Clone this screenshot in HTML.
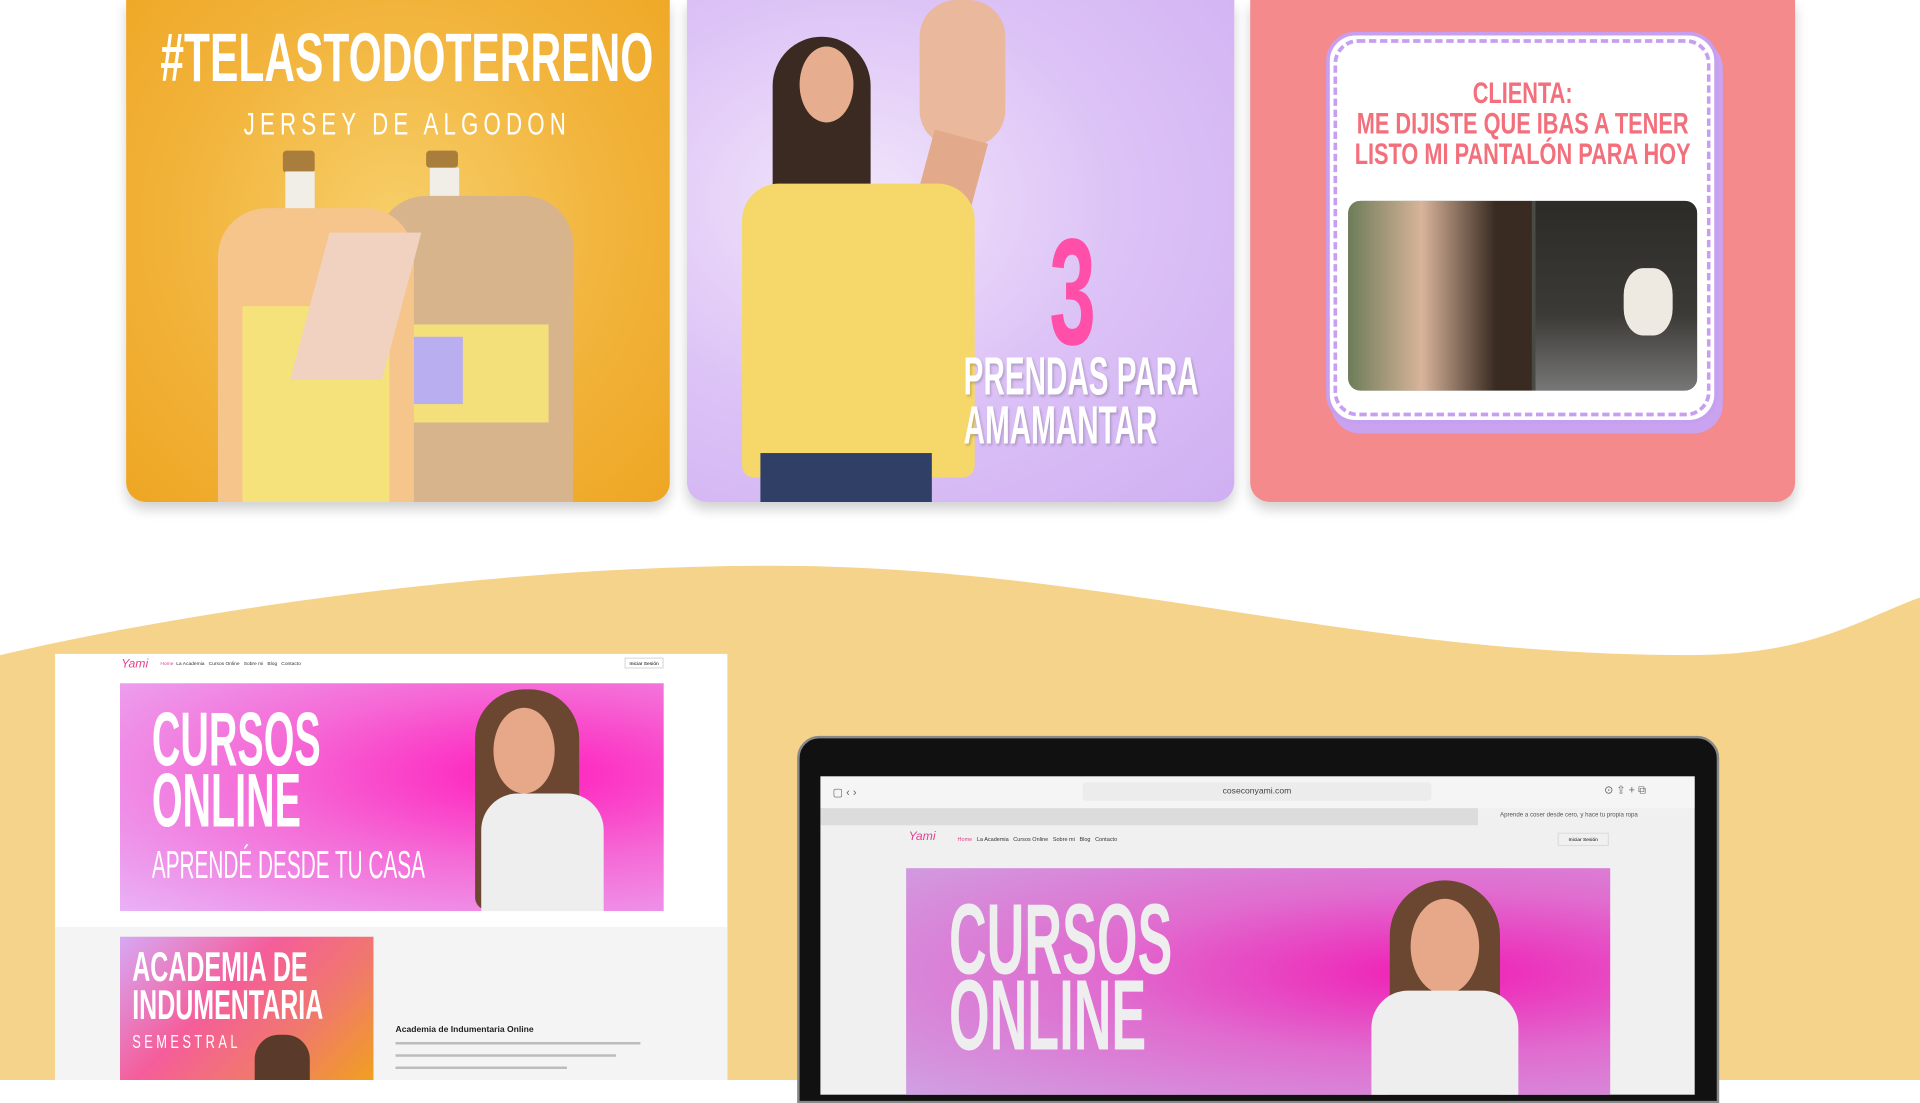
<!DOCTYPE html>
<html><head><meta charset="utf-8"><style>
*{margin:0;padding:0;box-sizing:border-box}
html,body{width:1920px;height:1080px;overflow:hidden;background:#fff;font-family:"Liberation Sans",sans-serif}
#s{position:absolute;left:0;top:0;width:1568px;height:882px;transform:scale(1.22449);transform-origin:0 0}
.a{position:absolute}
.cond{font-family:"Liberation Sans",sans-serif;font-weight:bold;transform-origin:0 0}
.card{position:absolute;top:0;height:410px;border-radius:0 0 16px 16px;box-shadow:0 6px 10px rgba(0,0,0,.18);overflow:hidden}
</style></head><body><div id="s">
<svg class="a" style="left:0;top:0" width="1568" height="882"><path d="M0 535 C150 500 400 462 630 462 C900 462 1100 535 1380 535 C1480 535 1520 505 1568 488 L1568 882 L0 882Z" fill="#f5d38a"/></svg>

<div class="card" style="left:103px;width:444px;background:radial-gradient(ellipse at 50% 45%,#f7cf6a 0%,#f2b43c 55%,#eea623 100%)">
 <div class="a cond" style="left:28px;top:14px;font-size:56px;color:#fff;transform:scaleX(.62);white-space:nowrap">#TELASTODOTERRENO</div>
 <div class="a" style="left:96px;top:86px;font-size:26px;color:#fff;letter-spacing:6px;white-space:nowrap;transform:scaleX(.7);transform-origin:0 0">JERSEY DE ALGODON</div>
 <div class="a" style="left:128px;top:123px;width:26px;height:18px;background:#a97e3c;border-radius:3px"></div>
 <div class="a" style="left:130px;top:140px;width:24px;height:40px;background:#f1eee8"></div>
 <div class="a" style="left:245px;top:123px;width:26px;height:14px;background:#a97e3c;border-radius:3px"></div>
 <div class="a" style="left:248px;top:137px;width:24px;height:30px;background:#f1eee8"></div>
 <div class="a" style="left:205px;top:160px;width:160px;height:250px;background:#d8b48c;border-radius:40px 40px 0 0"></div>
 <div class="a" style="left:225px;top:265px;width:120px;height:80px;background:#f3e07a"></div>
 <div class="a" style="left:235px;top:275px;width:40px;height:55px;background:#b9aef0"></div>
 <div class="a" style="left:75px;top:170px;width:160px;height:240px;background:#f5c58c;border-radius:40px 40px 0 0"></div>
 <div class="a" style="left:95px;top:250px;width:120px;height:160px;background:#f6e27a"></div>
 <div class="a" style="left:150px;top:190px;width:75px;height:120px;background:#f1d2c0;transform:skewX(-15deg)"></div>
</div>
<div class="card" style="left:561px;width:447px;background:radial-gradient(ellipse at 30% 40%,#f2e6fb 0%,#dcc2f6 50%,#cfaff2 100%)">
 <div class="a" style="left:70px;top:30px;width:80px;height:170px;background:#3a2a22;border-radius:40px 40px 10px 10px"></div>
 <div class="a" style="left:92px;top:38px;width:44px;height:62px;background:#e6ad8f;border-radius:50%"></div>
 <div class="a" style="left:190px;top:0;width:70px;height:120px;background:#eab99d;border-radius:30px"></div>
 <div class="a" style="left:190px;top:110px;width:45px;height:90px;background:#e3a98b;transform:rotate(15deg)"></div>
 <div class="a" style="left:45px;top:150px;width:190px;height:240px;background:#f6d86a;border-radius:30px 30px 10px 10px"></div>
 <div class="a" style="left:60px;top:370px;width:140px;height:40px;background:#2f3f66"></div>
 <div class="a cond" style="left:296px;top:168px;font-size:124px;color:#ff4fa8;transform:scaleX(.55)">3</div>
 <div class="a cond" style="left:226px;top:288px;font-size:44px;line-height:40px;color:#fff;transform:scaleX(.55);white-space:nowrap;text-shadow:2px 2px 3px rgba(0,0,0,.2)">PRENDAS PARA<br>AMAMANTAR</div>
</div>
<div class="card" style="left:1021px;width:445px;background:#f58a8c">
 <div class="a" style="left:66px;top:32px;width:320px;height:322px;background:#c9a3f0;border-radius:24px"></div>
 <div class="a" style="left:62px;top:26px;width:320px;height:320px;background:#fff;border-radius:24px;border:3px solid #c79ff0"></div>
 <div class="a" style="left:68px;top:32px;width:308px;height:308px;border-radius:20px;border:3px dashed #c79ff0"></div>
 <div class="a cond" style="left:0;width:445px;top:64px;text-align:center;font-size:24px;line-height:25px;color:#f26f7b"><div style="transform:scaleX(.74);transform-origin:50% 0">CLIENTA:<br>ME DIJISTE QUE IBAS A TENER<br>LISTO MI PANTALÓN PARA HOY</div></div>
 <div class="a" style="left:80px;top:164px;width:285px;height:155px;border-radius:10px;overflow:hidden;background:#4a4a44">
  <div class="a" style="left:0;top:0;width:150px;height:155px;background:linear-gradient(90deg,#6d7c58,#d8b49a 40%,#3a2b22 80%)"></div>
  <div class="a" style="left:153px;top:0;width:132px;height:155px;background:linear-gradient(180deg,#2d2b28,#3c3a36 60%,#777 100%)"></div>
  <div class="a" style="left:225px;top:55px;width:40px;height:55px;background:#eeeae2;border-radius:40%"></div>
 </div>
</div>

<div class="a" style="left:45px;top:534px;width:549px;height:348px;background:#fff;overflow:hidden">
 <div class="a" style="left:54px;top:3px;font-size:10px;color:#e2418e;font-style:italic">Yami</div>
 <div class="a" style="left:86px;top:5px;font-size:4px;color:#333;white-space:nowrap"><span style="color:#e2418e">Home</span>&nbsp; La Academia &nbsp; Cursos Online &nbsp; Sobre mi &nbsp; Blog &nbsp; Contacto</div>
 <div class="a" style="left:465px;top:3px;width:32px;height:9px;border:1px solid #ddd;font-size:4px;text-align:center;line-height:8px">Iniciar Sesión</div>
 <div class="a" style="left:53px;top:24px;width:444px;height:186px;background:radial-gradient(ellipse at 75% 40%,#ff1fbd 0%,#f56ad6 45%,#e9b2f7 100%)">
  <div class="a cond" style="left:26px;top:22px;font-size:62px;line-height:50px;color:#fff;transform:scaleX(.52)">CURSOS<br>ONLINE</div>
  <div class="a cond" style="left:26px;top:130px;font-size:32px;color:#fff;transform:scaleX(.53);white-space:nowrap;font-weight:normal">APRENDÉ DESDE TU CASA</div>
  <div class="a" style="left:290px;top:5px;width:85px;height:180px;background:#6b4630;border-radius:40px 40px 10px 10px"></div>
  <div class="a" style="left:305px;top:20px;width:50px;height:70px;background:#e6a888;border-radius:50%"></div>
  <div class="a" style="left:295px;top:90px;width:100px;height:96px;background:#eeeeee;border-radius:30px 30px 0 0"></div>
 </div>
 <div class="a" style="left:0;top:223px;width:549px;height:125px;background:#f4f4f4"></div>
 <div class="a" style="left:53px;top:231px;width:207px;height:117px;background:linear-gradient(135deg,#d7a8f5,#f55d9a 40%,#f07a6a 70%,#f0a020)">
  <div class="a cond" style="left:10px;top:10px;font-size:34px;line-height:31px;color:#fff;transform:scaleX(.6);white-space:nowrap">ACADEMIA DE<br>INDUMENTARIA</div>
  <div class="a" style="left:10px;top:78px;font-size:15px;letter-spacing:4px;color:#fff;transform:scaleX(.7);transform-origin:0 0">SEMESTRAL</div>
  <div class="a" style="left:110px;top:80px;width:45px;height:40px;background:#5a3a2a;border-radius:20px 20px 0 0"></div>
 </div>
 <div class="a" style="left:278px;top:304px;font-size:7px;font-weight:bold;color:#222">Academia de Indumentaria Online</div>
 <div class="a" style="left:278px;top:317px;width:200px;height:2px;background:#bbb"></div>
 <div class="a" style="left:278px;top:327px;width:180px;height:2px;background:#bbb"></div>
 <div class="a" style="left:278px;top:337px;width:140px;height:2px;background:#bbb"></div>
</div>

<div class="a" style="left:651px;top:601px;width:753px;height:300px;background:#111;border-radius:18px 18px 0 0;border:2px solid #888"></div>
<div class="a" style="left:670px;top:634px;width:714px;height:260px;background:#f0f0f0;overflow:hidden">
 <div class="a" style="left:0;top:0;width:714px;height:26px;background:#f5f5f5"></div>
 <div class="a" style="left:214px;top:5px;width:285px;height:15px;background:#ececec;border-radius:3px;font-size:7px;color:#444;text-align:center;line-height:15px">coseconyami.com</div>
 <div class="a" style="left:10px;top:8px;font-size:9px;color:#666">▢ ‹ ›</div>
 <div class="a" style="left:640px;top:6px;font-size:9px;color:#666">⊙ ⇪ + ⧉</div>
 <div class="a" style="left:0;top:26px;width:537px;height:14px;background:#dcdcdc"></div>
 <div class="a" style="left:555px;top:29px;font-size:5px;color:#555;white-space:nowrap">Aprende a coser desde cero, y hace tu propia ropa</div>
 <div class="a" style="left:72px;top:44px;font-size:10px;color:#e2418e;font-style:italic">Yami</div>
 <div class="a" style="left:112px;top:49px;font-size:4.5px;color:#333;white-space:nowrap"><span style="color:#e2418e">Home</span>&nbsp;&nbsp; La Academia &nbsp; Cursos Online &nbsp; Sobre mi &nbsp; Blog &nbsp; Contacto</div>
 <div class="a" style="left:602px;top:46px;width:42px;height:11px;border:1px solid #ddd;font-size:4px;text-align:center;line-height:10px">Iniciar Sesión</div>
 <div class="a" style="left:70px;top:75px;width:575px;height:190px;background:radial-gradient(ellipse at 75% 45%,#f01fb5 0%,#e06ccf 45%,#cfa3e3 100%)">
  <div class="a cond" style="left:35px;top:28px;font-size:82px;line-height:62px;color:#eee;transform:scaleX(.52)">CURSOS<br>ONLINE</div>
  <div class="a" style="left:395px;top:10px;width:90px;height:200px;background:#6b4630;border-radius:45px 45px 10px 10px"></div>
  <div class="a" style="left:412px;top:25px;width:56px;height:78px;background:#e6a888;border-radius:50%"></div>
  <div class="a" style="left:380px;top:100px;width:120px;height:100px;background:#eeeeee;border-radius:30px 30px 0 0"></div>
 </div>
</div>
</div></body></html>
